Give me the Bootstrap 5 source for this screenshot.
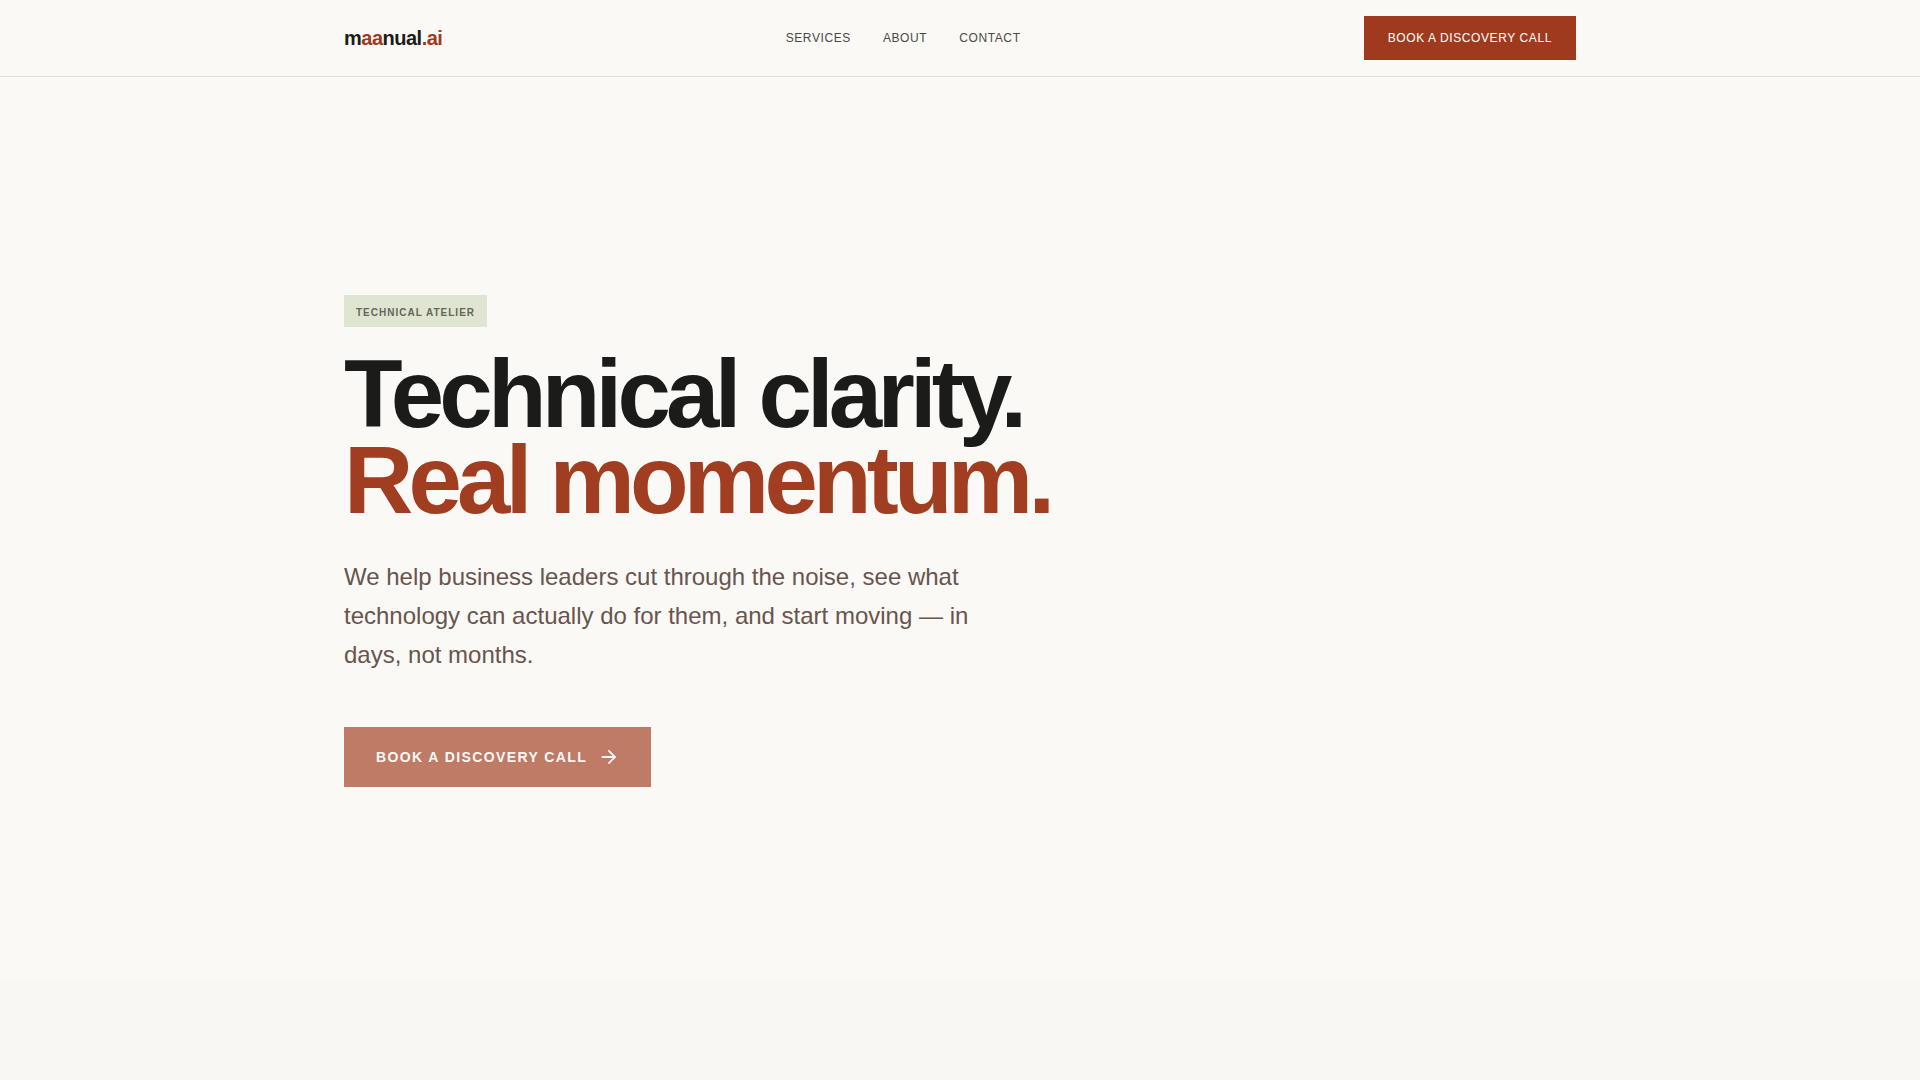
<!DOCTYPE html>
<html lang="en">
<head>
<meta charset="utf-8">
<meta name="viewport" content="width=device-width, initial-scale=1">
<title>maanual.ai</title>
<link href="https://cdn.jsdelivr.net/npm/bootstrap@5.3.0/dist/css/bootstrap.min.css" rel="stylesheet">
<style>
  :root { --paper: #faf9f5; --ink: #1b1c1a; --rust: #9f3a1e; }
  body { background: var(--paper); color: var(--ink); font-family: "Liberation Sans", Arial, sans-serif; }
  .shell { max-width: 1280px; }
  .site-header { background: var(--paper); border-bottom: 1px solid #e0dfda; }
  .brand { font-size: 20px; line-height: 28px; letter-spacing: -0.025em; color: var(--ink); }
  .rust { color: var(--rust); }
  .headline .rust { color: #a13e22; }
  .site-header .nav-link { font-size: 12px; line-height: 16px; letter-spacing: 0.05em; color: #494a47; }
  .btn-rust { --bs-btn-color: #fff; --bs-btn-bg: var(--rust); --bs-btn-border-width: 0; --bs-btn-border-radius: 0;
    --bs-btn-hover-color: #fff; --bs-btn-hover-bg: #872f17; }
  .btn-header { font-size: 12px; line-height: 16px; letter-spacing: 0.05em; padding: 14px 24px; }
  .hero { padding: 218px 0 192px; }
  .tagline { background: #dfe5d0; color: #62675a; font-size: 10px; line-height: 16px; letter-spacing: 0.1em; padding: 10px 12px 6px; }
  .headline { font-size: 96px; line-height: 86px; letter-spacing: -0.05em; margin-bottom: 34px; }
  .intro { font-size: 24px; line-height: 39px; max-width: 672px; color: #69544e; margin-bottom: 53px; }
  .btn-hero { --bs-btn-color: #fdf8f5; --bs-btn-bg: #bf7b65; font-size: 14px; line-height: 20px; letter-spacing: 0.1em; padding: 20px 32px; gap: 12px; }
  .next-section { background: #f8f7f3; min-height: 101px; }
</style>
</head>
<body>
<header class="site-header">
  <nav class="shell container-fluid d-flex justify-content-between align-items-center px-4 py-3" aria-label="Main">
    <a class="brand fw-bold text-decoration-none" href="#">m<span class="rust">aa</span>nual<span class="rust">.ai</span></a>
    <div class="nav">
      <a class="nav-link px-3 py-0" href="#services">SERVICES</a>
      <a class="nav-link px-3 py-0" href="#about">ABOUT</a>
      <a class="nav-link px-3 py-0" href="#contact">CONTACT</a>
    </div>
    <button type="button" class="btn btn-rust btn-header">BOOK A DISCOVERY CALL</button>
  </nav>
</header>
<main>
  <section class="hero">
    <div class="shell container-fluid px-4 d-flex flex-column align-items-start">
      <span class="tagline fw-bold mb-4">TECHNICAL ATELIER</span>
      <h1 class="headline fw-bold">Technical clarity.<br><span class="rust">Real momentum.</span></h1>
      <p class="intro">We help business leaders cut through the noise, see what technology can actually do for them, and start moving — in days, not months.</p>
      <button type="button" class="btn btn-rust btn-hero fw-bold d-inline-flex align-items-center">BOOK A DISCOVERY CALL
        <svg width="20" height="20" viewBox="1 1 22 22" fill="currentColor" aria-hidden="true"><path d="M12 4l-1.41 1.41L16.17 11H4v2h12.17l-5.58 5.59L12 20l8-8z"/></svg>
      </button>
    </div>
  </section>
  <section class="next-section" id="services"></section>
</main>
<script src="https://cdn.jsdelivr.net/npm/bootstrap@5.3.0/dist/js/bootstrap.bundle.min.js"></script>
</body>
</html>
